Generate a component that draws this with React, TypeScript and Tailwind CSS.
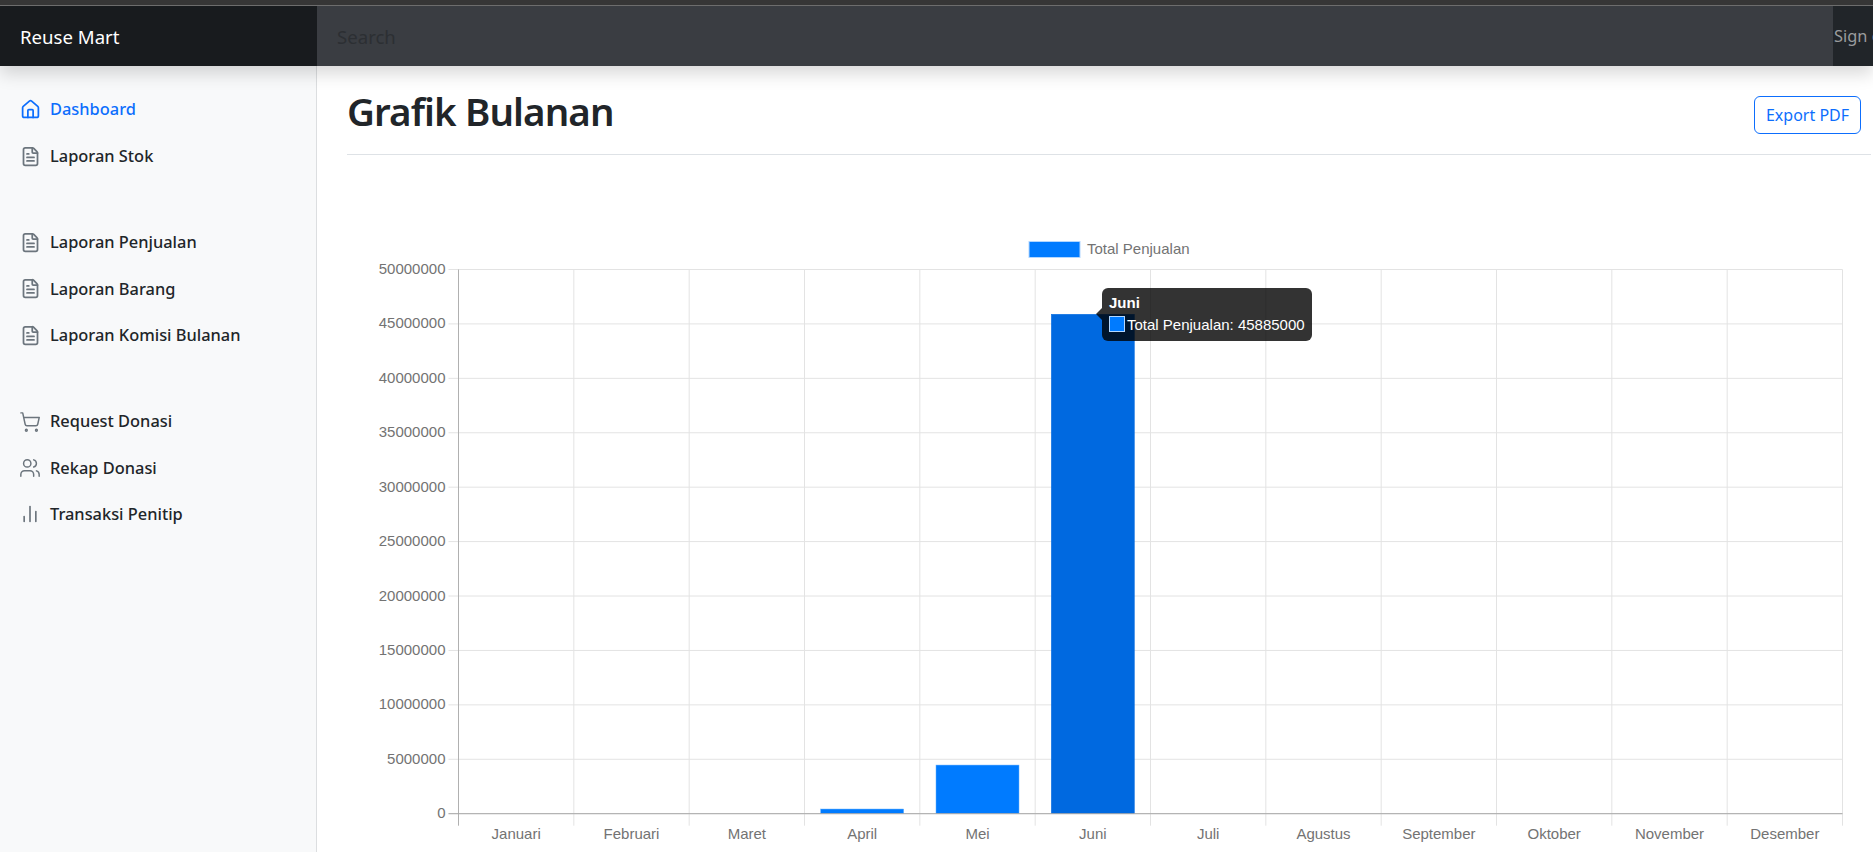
import { House, FileText, ShoppingCart, Users, BarChart2 } from "lucide-react";
import type { ReactNode } from "react";

const months = ["Januari","Februari","Maret","April","Mei","Juni","Juli","Agustus","September","Oktober","November","Desember"];
const values = [0,0,0,430000,4470000,45885000,0,0,0,0,0,0];
const ticks = [50000000,45000000,40000000,35000000,30000000,25000000,20000000,15000000,10000000,5000000,0];

function NavItem({ icon, label, active }: { icon: ReactNode; label: string; active?: boolean }) {
  return (
    <a className={`flex items-center h-[46.4px] pl-5 gap-[10px] text-[16.4px] font-medium ${active ? "text-[#0d6efd]" : "text-[#212529]"}`}>
      <span className={`w-[20px] flex justify-center ${active ? "" : "text-[#6c757d]"}`}>{icon}</span>
      <span>{label}</span>
    </a>
  );
}

function Chart() {
  const L = 458.5, R = 1842.5, T = 269.5, B = 813.7;
  const w = R - L, h = B - T;
  const ox = 347, oy = 220;
  const step = w / 12;
  return (
    <svg width="1526" height="632" viewBox={`${ox} ${oy} 1526 632`} className="block" style={{ fontFamily: '"Liberation Sans", Arial, sans-serif' }}>
      <rect x="1029" y="241.5" width="51" height="16" fill="#007bff" stroke="#b3d7ff" strokeWidth="1" />
      <text x="1087" y="254" fontSize="15" fill="#737373">Total Penjualan</text>
      {ticks.map((t, i) => {
        const y = T + (h * i) / 10;
        return (
          <g key={t}>
            <line x1={L - 10} x2={R} y1={y} y2={y} stroke="#e3e3e3" />
            <text x={L - 13} y={y + 4.5} fontSize="15" fill="#737373" textAnchor="end">{t}</text>
          </g>
        );
      })}
      {months.map((m, i) => {
        const x = L + step * i;
        return <line key={m} x1={x} x2={x} y1={T} y2={B + 12} stroke={i === 0 ? "#b0b0b0" : "#e3e3e3"} />;
      })}
      <line x1={R} x2={R} y1={T} y2={B + 12} stroke="#e3e3e3" />
      {months.map((m, i) => (
        <text key={m} x={L + step * (i + 0.5)} y={839} fontSize="15" fill="#737373" textAnchor="middle">{m}</text>
      ))}
      {values.map((v, i) => {
        if (!v) return null;
        const bh = (v / 50000000) * h;
        return (
          <rect
            key={i}
            x={L + step * (i + 0.5) - 41.5}
            y={B - bh}
            width="83"
            height={bh}
            fill={i === 5 ? "#0069e0" : "#007bff"}
            stroke={i === 5 ? "#0069e0" : "#66b0ff"}
            strokeWidth="0.5"
          />
        );
      })}
      <line x1={L - 10} x2={R} y1={B} y2={B} stroke="#a8a8a8" />
    </svg>
  );
}

export default function App() {
  const ui = { fontFamily: '"Noto Sans", "Open Sans", sans-serif' };
  return (
    <div className="h-[852px] w-[1873px] overflow-hidden bg-white flex flex-col text-[#212529]" style={ui}>
      <div className="h-[6px] shrink-0 bg-[#373737] border-b border-[#707070]" />
      <header className="h-[60px] shrink-0 flex bg-[#212529] relative z-10 shadow-[0_8px_16px_rgba(0,0,0,0.15)]">
        <div className="w-[317px] shrink-0 bg-[#181b1e] flex items-center pl-5 pt-[1px] text-[18.6px] text-white">Reuse Mart</div>
        <div className="flex-1 bg-[#3a3d42] flex items-center pl-5 pt-[1px] text-[#2c2f33] text-[18.6px]">Search</div>
        <div className="w-[40px] shrink-0 overflow-hidden whitespace-nowrap flex items-center pl-[1px] pt-[1px] text-[#9a9c9e] text-[16.4px] justify-start">Sign out</div>
      </header>
      <div className="flex-1 flex min-h-0">
        <aside className="w-[317px] shrink-0 bg-[#f8f9fa] border-r border-[#dcdee0] pt-[20.5px]">
          <NavItem active icon={<House size={21} strokeWidth={2} className="shrink-0" />} label="Dashboard" />
          <NavItem icon={<FileText size={21} strokeWidth={2} className="shrink-0" />} label="Laporan Stok" />
          <div className="h-[40px]" />
          <NavItem icon={<FileText size={21} strokeWidth={2} className="shrink-0" />} label="Laporan Penjualan" />
          <NavItem icon={<FileText size={21} strokeWidth={2} className="shrink-0" />} label="Laporan Barang" />
          <NavItem icon={<FileText size={21} strokeWidth={2} className="shrink-0" />} label="Laporan Komisi Bulanan" />
          <div className="h-[40px]" />
          <NavItem icon={<ShoppingCart size={22} strokeWidth={1.6} className="shrink-0" />} label="Request Donasi" />
          <NavItem icon={<Users size={22} strokeWidth={1.6} className="shrink-0" />} label="Rekap Donasi" />
          <NavItem icon={<BarChart2 size={20} strokeWidth={2} className="shrink-0" />} label="Transaksi Penitip" />
        </aside>
        <main className="flex-1 min-w-0 relative">
          <div className="ml-[30px] mr-[2px] h-[89px] border-b border-[#dee2e6] flex items-start justify-between">
            <h1 className="text-[38.5px] leading-[48px] font-semibold mt-[21px] tracking-[-0.9px]">Grafik Bulanan</h1>
            <button className="mt-[30px] mr-[10px] h-[38px] w-[107px] border border-[#0d6efd] rounded-[6px] text-[#0d6efd] text-[16px]">Export PDF</button>
          </div>
          <div className="absolute left-[30px] top-[154px]">
            <Chart />
          </div>
          <div className="absolute left-[785px] top-[222px] w-[210px] h-[53px] rounded-[6px] bg-black/80 text-white text-[15px] leading-none px-[7px] pt-[7px]" style={{ fontFamily: '"Liberation Sans", Arial, sans-serif' }}>
            <div className="font-bold mb-[6px]">Juni</div>
            <div className="flex items-center gap-[2px]">
              <span className="w-[16px] h-[16px] bg-[#007bff] border border-[#b3d7ff]" />
              <span>Total Penjualan: 45885000</span>
            </div>
            <span className="absolute -left-[6px] top-[20px] w-0 h-0 border-y-[6px] border-y-transparent border-r-[6px] border-r-black/80" />
          </div>
        </main>
      </div>
    </div>
  );
}
